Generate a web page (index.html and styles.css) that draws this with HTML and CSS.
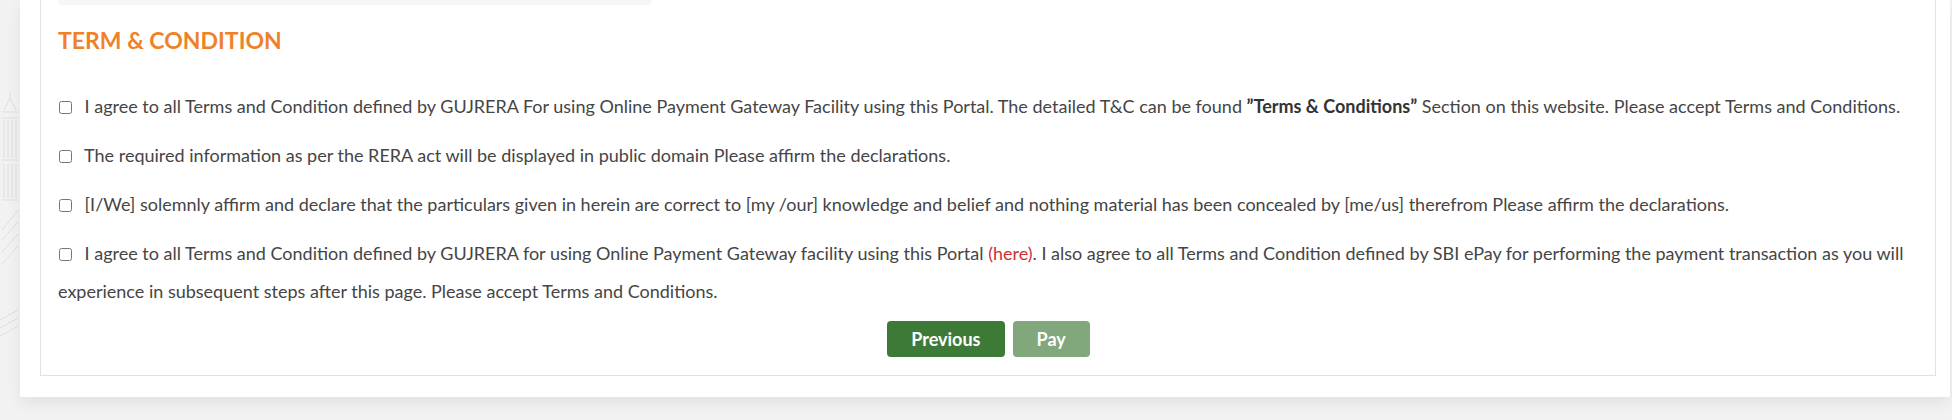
FILE: index.html
```html
<!DOCTYPE html>
<html lang="en">
<head>
    <meta charset="UTF-8">
    <meta name="viewport" content="width=device-width, initial-scale=1.0">
    <title>Payment - Term &amp; Condition</title>
    <link rel="stylesheet" href="styles.css">
</head>
<body>

    <div class="gutter">
        <!-- faded building in the page background -->
        <svg class="watermark" width="20" height="300" viewBox="0 0 20 300">
            <g fill="none" stroke="#dedede" stroke-width="1">
                <path d="M4 70 L10 58 L16 70"/>
                <path d="M10 52 L10 58"/>
                <path d="M2 72 H18 M2 78 H18 M2 120 H18 M2 160 H18"/>
                <path d="M4 80 V118 M8 80 V118 M12 80 V118 M16 80 V118"/>
                <path d="M4 124 V158 M8 124 V158 M12 124 V158 M16 124 V158"/>
                <path d="M2 190 L18 170 M2 200 L18 182 M2 212 L18 194 M2 224 L18 206"/>
                <path d="M0 280 L18 270 M0 288 L18 278 M0 296 L18 286"/>
            </g>
        </svg>
    </div>

    <div class="card">
        <div class="panel">
            <div class="field-end"></div>

            <h3 class="section-title">TERM &amp; CONDITION</h3>

            <div class="terms">
                <p class="term">
                    <input type="checkbox" id="term1">
                    I agree to all Terms and Condition defined by GUJRERA For using Online Payment Gateway Facility using this Portal. The detailed T&amp;C can be found <b>”Terms &amp; Conditions”</b> Section on this website. Please accept Terms and Conditions.
                </p>
                <p class="term">
                    <input type="checkbox" id="term2">
                    The required information as per the RERA act will be displayed in public domain Please affirm the declarations.
                </p>
                <p class="term">
                    <input type="checkbox" id="term3">
                    [I/We] solemnly affirm and declare that the particulars given in herein are correct to [my /our] knowledge and belief and nothing material has been concealed by [me/us] therefrom Please affirm the declarations.
                </p>
                <p class="term">
                    <input type="checkbox" id="term4">
                    I agree to all Terms and Condition defined by GUJRERA for using Online Payment Gateway facility using this Portal <a href="#" class="link-red">(here)</a>. I also agree to all Terms and Condition defined by SBI ePay for performing the payment transaction as you will experience in subsequent steps after this page. Please accept Terms and Conditions.
                </p>
            </div>

            <div class="actions">
                <button class="btn btn-green">Previous</button>
                <button class="btn btn-green" disabled>Pay</button>
            </div>
        </div>
    </div>

</body>
</html>
```

FILE: styles.css
```css
body {
    margin: 0;
    font-family: Lato, "Open Sans", sans-serif;
    background-color: #f2f2f2;
    color: #454545;
    display: flex;
    align-items: flex-start;
    height: 420px;
    overflow: hidden;
}

.gutter {
    width: 20px;
    flex-shrink: 0;
    padding-top: 40px;
}

.watermark {
    display: block;
}

.card {
    width: 1930px;
    background: #fff;
    padding: 0 14px 21px 20px;
    box-sizing: border-box;
    box-shadow: 0 6px 14px rgba(0, 0, 0, 0.07);
}

.panel {
    border: 1px solid #e2e2e2;
    border-top: none;
    padding: 0 16px 18px 17px;
}

.field-end {
    width: 594px;
    height: 5px;
    background: #f6f6f6;
    border-radius: 0 0 4px 4px;
}

.section-title {
    margin: 22px 0 0;
    font-size: 23px;
    font-weight: bold;
    line-height: 26px;
    color: #ef8228;
}

.terms {
    margin-top: 34px;
}

.term {
    margin: 0 0 11px;
    font-size: 18px;
    line-height: 38px;
}

.term input[type="checkbox"] {
    width: 13px;
    height: 13px;
    margin: 0 8px 0 1px;
    vertical-align: -1px;
}

.term b {
    color: #333;
}

.link-red {
    color: #cf3035;
    text-decoration: none;
}

.actions {
    display: flex;
    justify-content: center;
    gap: 8px;
}

.btn {
    font-family: Lato, sans-serif;
    font-size: 18px;
    font-weight: bold;
    height: 36px;
    padding: 0 24px;
    border: none;
    border-radius: 4px;
    color: #fff;
    cursor: pointer;
}

.btn-green {
    background-color: #3d7a37;
}

.btn-green:disabled {
    opacity: 0.65;
    cursor: default;
}
```
